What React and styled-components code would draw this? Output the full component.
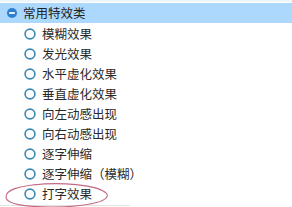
import React from "react";
import styled, { createGlobalStyle } from "styled-components";

const Global = createGlobalStyle`
  html, body { margin: 0; padding: 0; background: #ffffff; }
  body { font-family: "Noto Sans CJK SC", "Microsoft YaHei", sans-serif; }
`;

const Page = styled.div`
  position: relative;
  width: 292px;
  height: 207px;
  overflow: hidden;
  border-top: 2px solid #eef6fb;
  box-sizing: border-box;
  padding-top: 1px;
`;

const Header = styled.div`
  display: flex;
  align-items: center;
  gap: 6px;
  height: 20px;
  padding-left: 7px;
  background: #abd8fc;
  color: #222;
  font-size: 12.5px;
  line-height: 20px;
`;

const List = styled.div`
  display: flex;
  flex-direction: column;
  padding-top: 1px;
`;

const Row = styled.div`
  display: flex;
  align-items: center;
  gap: 6px;
  height: 20px;
  padding-left: 24px;
  color: #2a2a2a;
  font-size: 12.5px;
  line-height: 20px;
  white-space: nowrap;
`;

const BottomLine = styled.div`
  width: 130px;
  height: 1px;
  margin-top: 1px;
  background: #e2e2e2;
`;

const Annotation = styled.svg`
  position: absolute;
  left: 3px;
  top: 180px;
  width: 110px;
  height: 27px;
  pointer-events: none;
`;

const Minus = () => (
  <svg width="10" height="10" viewBox="0 0 10 10">
    <circle cx="5" cy="5" r="5" fill="#2f7fd0" />
    <rect x="2.2" y="4.1" width="5.6" height="1.8" fill="#ffffff" />
  </svg>
);

const Radio = () => (
  <svg width="12" height="12" viewBox="0 0 12 12">
    <circle cx="6" cy="6" r="4.9" fill="#ffffff" stroke="#3a88b0" strokeWidth="1.6" />
  </svg>
);

const items = [
  "模糊效果",
  "发光效果",
  "水平虚化效果",
  "垂直虚化效果",
  "向左动感出现",
  "向右动感出现",
  "逐字伸缩",
  "逐字伸缩（模糊）",
  "打字效果",
];

export default function App() {
  return (
    <Page>
      <Global />
      <Header>
        <Minus />
        <span>常用特效类</span>
      </Header>
      <List>
        {items.map((t) => (
          <Row key={t}>
            <Radio />
            <span>{t}</span>
          </Row>
        ))}
        <BottomLine />
      </List>
      <Annotation viewBox="0 0 110 27">
        <path
          d="M30 3 C 55 0, 95 2, 104 12 C 108 20, 80 25, 50 25 C 20 25, 3 22, 3 15 C 3 8, 14 4, 40 2"
          fill="none"
          stroke="#c56a86"
          strokeWidth="1.1"
        />
      </Annotation>
    </Page>
  );
}
